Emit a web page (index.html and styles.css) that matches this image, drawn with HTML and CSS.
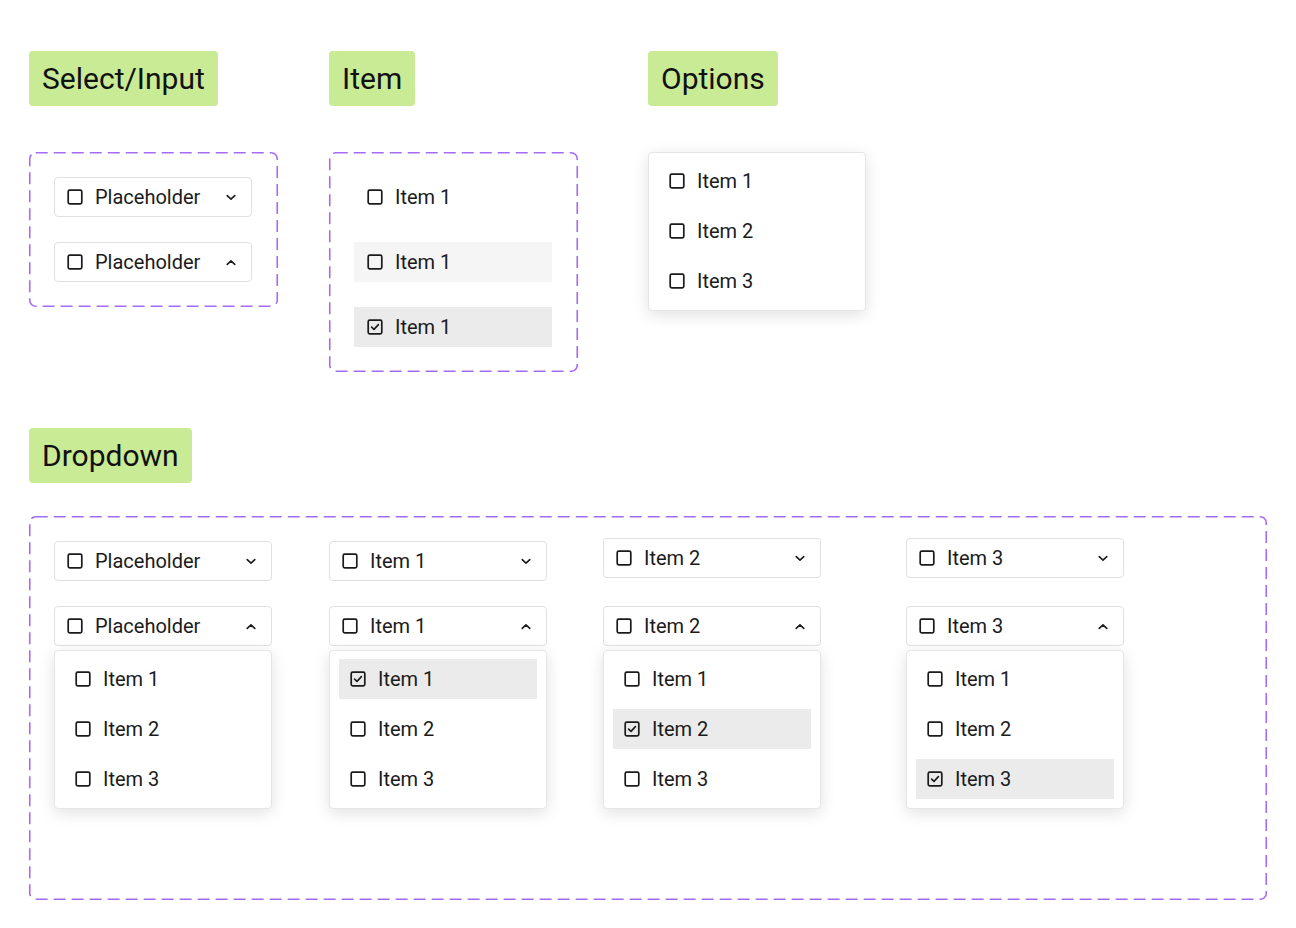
FILE: index.html
```html
<!DOCTYPE html>
<html>
<head>
<meta charset="utf-8">
<link rel="stylesheet" href="styles.css">
</head>
<body>
<svg width="0" height="0" class="defs">
  <defs>
    <symbol id="cb" viewBox="0 0 16 16"><rect x="1.2" y="1.2" width="13.6" height="13.6" rx="1.5" fill="none" stroke="#1b1b1b" stroke-width="1.7"/></symbol>
    <symbol id="cbc" viewBox="0 0 16 16"><rect x="1.2" y="1.2" width="13.6" height="13.6" rx="1.5" fill="none" stroke="#1b1b1b" stroke-width="1.7"/><path d="M4.6 8.1 L7 10.4 L11.4 5.6" fill="none" stroke="#1b1b1b" stroke-width="1.6" stroke-linecap="round" stroke-linejoin="round"/></symbol>
    <symbol id="down" viewBox="0 0 10 7"><path d="M1.2 1.6 L5 5.2 L8.8 1.6" fill="none" stroke="#1b1b1b" stroke-width="1.6" stroke-linecap="round" stroke-linejoin="round"/></symbol>
    <symbol id="up" viewBox="0 0 10 7"><path d="M1.2 5.4 L5 1.8 L8.8 5.4" fill="none" stroke="#1b1b1b" stroke-width="1.6" stroke-linecap="round" stroke-linejoin="round"/></symbol>
  </defs>
</svg>

<div class="top">
  <section class="group">
    <div class="tag">Select/Input</div>
    <div class="frame frame-select">
      <svg class="dash"><rect x="0.75" y="0.75" width="calc(100% - 1.5px)" height="calc(100% - 1.5px)" rx="6" ry="6"/></svg>
      <div class="select"><svg class="cb"><use href="#cb"/></svg><span class="label">Placeholder</span><svg class="chev"><use href="#down"/></svg></div>
      <div class="select"><svg class="cb"><use href="#cb"/></svg><span class="label">Placeholder</span><svg class="chev"><use href="#up"/></svg></div>
    </div>
  </section>

  <section class="group">
    <div class="tag">Item</div>
    <div class="frame frame-item">
      <svg class="dash"><rect x="0.75" y="0.75" width="calc(100% - 1.5px)" height="calc(100% - 1.5px)" rx="6" ry="6"/></svg>
      <div class="item"><svg class="cb"><use href="#cb"/></svg><span class="label">Item 1</span></div>
      <div class="item hover"><svg class="cb"><use href="#cb"/></svg><span class="label">Item 1</span></div>
      <div class="item selected"><svg class="cb"><use href="#cbc"/></svg><span class="label">Item 1</span></div>
    </div>
  </section>

  <section class="group">
    <div class="tag">Options</div>
    <div class="menu options">
      <div class="mitem"><svg class="cb"><use href="#cb"/></svg><span class="label">Item 1</span></div>
      <div class="mitem"><svg class="cb"><use href="#cb"/></svg><span class="label">Item 2</span></div>
      <div class="mitem"><svg class="cb"><use href="#cb"/></svg><span class="label">Item 3</span></div>
    </div>
  </section>
</div>

<section class="group dropdown-group">
  <div class="tag">Dropdown</div>
  <div class="frame frame-dropdown">
    <svg class="dash"><rect x="0.75" y="0.75" width="calc(100% - 1.5px)" height="calc(100% - 1.5px)" rx="6" ry="6"/></svg>

    <div class="col">
      <div class="select wide"><svg class="cb"><use href="#cb"/></svg><span class="label">Placeholder</span><svg class="chev"><use href="#down"/></svg></div>
      <div class="open">
        <div class="select wide"><svg class="cb"><use href="#cb"/></svg><span class="label">Placeholder</span><svg class="chev"><use href="#up"/></svg></div>
        <div class="menu">
          <div class="mitem"><svg class="cb"><use href="#cb"/></svg><span class="label">Item 1</span></div>
          <div class="mitem"><svg class="cb"><use href="#cb"/></svg><span class="label">Item 2</span></div>
          <div class="mitem"><svg class="cb"><use href="#cb"/></svg><span class="label">Item 3</span></div>
        </div>
      </div>
    </div>

    <div class="col">
      <div class="select wide"><svg class="cb"><use href="#cb"/></svg><span class="label">Item 1</span><svg class="chev"><use href="#down"/></svg></div>
      <div class="open">
        <div class="select wide"><svg class="cb"><use href="#cb"/></svg><span class="label">Item 1</span><svg class="chev"><use href="#up"/></svg></div>
        <div class="menu">
          <div class="mitem selected"><svg class="cb"><use href="#cbc"/></svg><span class="label">Item 1</span></div>
          <div class="mitem"><svg class="cb"><use href="#cb"/></svg><span class="label">Item 2</span></div>
          <div class="mitem"><svg class="cb"><use href="#cb"/></svg><span class="label">Item 3</span></div>
        </div>
      </div>
    </div>

    <div class="col raised">
      <div class="select wide"><svg class="cb"><use href="#cb"/></svg><span class="label">Item 2</span><svg class="chev"><use href="#down"/></svg></div>
      <div class="open">
        <div class="select wide"><svg class="cb"><use href="#cb"/></svg><span class="label">Item 2</span><svg class="chev"><use href="#up"/></svg></div>
        <div class="menu">
          <div class="mitem"><svg class="cb"><use href="#cb"/></svg><span class="label">Item 1</span></div>
          <div class="mitem selected"><svg class="cb"><use href="#cbc"/></svg><span class="label">Item 2</span></div>
          <div class="mitem"><svg class="cb"><use href="#cb"/></svg><span class="label">Item 3</span></div>
        </div>
      </div>
    </div>

    <div class="col raised">
      <div class="select wide"><svg class="cb"><use href="#cb"/></svg><span class="label">Item 3</span><svg class="chev"><use href="#down"/></svg></div>
      <div class="open">
        <div class="select wide"><svg class="cb"><use href="#cb"/></svg><span class="label">Item 3</span><svg class="chev"><use href="#up"/></svg></div>
        <div class="menu">
          <div class="mitem"><svg class="cb"><use href="#cb"/></svg><span class="label">Item 1</span></div>
          <div class="mitem"><svg class="cb"><use href="#cb"/></svg><span class="label">Item 2</span></div>
          <div class="mitem selected"><svg class="cb"><use href="#cbc"/></svg><span class="label">Item 3</span></div>
        </div>
      </div>
    </div>
  </div>
</section>
</body>
</html>
```

FILE: styles.css
```css
* { box-sizing: border-box; }

html, body {
  margin: 0;
  background: #ffffff;
}

body {
  padding: 51px 0 0 29px;
  font-family: Roboto, "Liberation Sans", Arial, sans-serif;
  color: #1b1b1b;
}

.defs {
  position: absolute;
  width: 0;
  height: 0;
}

.top {
  display: grid;
  grid-template-columns: 300px 319px 240px;
  align-items: start;
}

.group {
  display: flex;
  flex-direction: column;
  align-items: flex-start;
  gap: 46px;
}

.tag {
  height: 55px;
  padding: 0 13px;
  display: flex;
  align-items: center;
  background: #c9eb95;
  border-radius: 4px;
  font-size: 30px;
  line-height: 1;
  color: #111;
}

.frame {
  position: relative;
}

.dash {
  position: absolute;
  left: 0;
  top: 0;
  width: 100%;
  height: 100%;
  overflow: visible;
  pointer-events: none;
}

.dash rect {
  fill: none;
  stroke: #a36cf6;
  stroke-width: 1.6;
  stroke-dasharray: 12 6;
}

.frame-select {
  width: 249px;
  padding: 25px;
  display: flex;
  flex-direction: column;
  gap: 25px;
}

.frame-item {
  width: 249px;
  padding: 25px;
  display: flex;
  flex-direction: column;
  gap: 25px;
}

.select {
  width: 198px;
  height: 40px;
  border: 1px solid #e0e0e0;
  border-radius: 4px;
  background: #fff;
  display: flex;
  align-items: center;
  padding: 0 15px 0 12px;
}

.select.wide {
  width: 218px;
}

.cb {
  width: 16px;
  height: 16px;
  flex: none;
}

.label {
  font-size: 20px;
  line-height: 1;
  margin-left: 12px;
  flex: 1;
  white-space: nowrap;
}

.chev {
  width: 10px;
  height: 7px;
  flex: none;
}

.item {
  width: 198px;
  height: 40px;
  display: flex;
  align-items: center;
  padding: 0 13px;
}

.item.hover {
  background: #f5f5f5;
}

.item.selected,
.mitem.selected {
  background: #ebebeb;
}

.menu {
  width: 218px;
  padding: 8px 9px 9px;
  border: 1px solid #e6e6e6;
  border-radius: 4px;
  background: #fff;
  box-shadow: 0 4px 16px rgba(0, 0, 0, 0.12);
  display: flex;
  flex-direction: column;
  gap: 10px;
}

.options {
  width: 218px;
}

.mitem {
  height: 40px;
  display: flex;
  align-items: center;
  padding: 0 11px;
}

.dropdown-group {
  margin-top: 56px;
  gap: 33px;
}

.frame-dropdown {
  width: 1238px;
  height: 384px;
  padding: 22px 0 0 25px;
  display: grid;
  grid-template-columns: 275px 274px 303px 218px;
  align-items: start;
}

.col {
  display: flex;
  flex-direction: column;
  padding-top: 3px;
  gap: 25px;
}

.col.raised {
  padding-top: 0;
  gap: 28px;
}

.open {
  display: flex;
  flex-direction: column;
  gap: 4px;
}
```
